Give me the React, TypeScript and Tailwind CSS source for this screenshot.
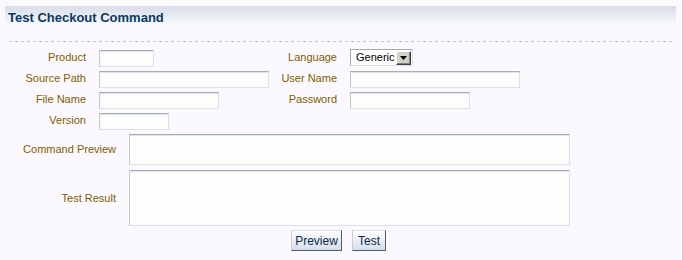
import React from "react";

const inputCls =
  "h-[17px] bg-[#fcfefc] border border-t-[#a5adb5] border-l-[#c3c8cf] border-r-[#dcdfe7] border-b-[#dcdfe7] shadow-[inset_0_1px_1px_#dfe3e6] outline-none px-1 text-[11px]";

function Label({ children, w }: { children: React.ReactNode; w: string }) {
  return <div className={`${w} shrink-0 text-right text-[11px] leading-[13px] text-[#7f5c00]`}>{children}</div>;
}

function Select() {
  return (
    <div className="flex h-[17px] w-[63px] items-center justify-between border border-t-[#a7a9ae] border-l-[#a7a9ae] border-r-[#dcdfe7] border-b-[#dcdfe7] bg-white pl-[5px] pr-px">
      <span className="text-[11px] leading-[13px] text-black">Generic</span>
      <div className="flex h-[14px] w-[15px] items-center justify-center border border-t-white border-l-white border-r-[#404040] border-b-[#404040] bg-[#d4d0c8] shadow-[inset_-1px_-1px_0_#808080]">
        <svg width="7" height="4" viewBox="0 0 7 4">
          <path d="M0 0h7L3.5 4z" fill="#000" />
        </svg>
      </div>
    </div>
  );
}

function Button({ children, w }: { children: React.ReactNode; w: string }) {
  return (
    <button
      className={`${w} h-[21px] border border-t-[#d9dee6] border-l-[#c9cfd8] border-r-[#4e5d6e] border-b-[#4e5d6e] bg-[linear-gradient(#ffffff,#d6deea)] text-[12px] leading-[14px] text-[#0c2a4c]`}
    >
      {children}
    </button>
  );
}

export default function App() {
  return (
    <div className="h-[260px] w-[683px] overflow-hidden border-r border-[#c9c9c9] bg-[#fbf9fd] pt-[6px] font-['Liberation_Sans',Arial,sans-serif]">
      <div className="ml-[5px] h-[17px] w-[671px] bg-[linear-gradient(#d9dde9,#f3f6fa)] pl-[3px] pt-[5px]">
        <h1 className="text-[13px] font-bold leading-[13px] text-[#0a3a5c]">Test Checkout Command</h1>
      </div>

      <div className="ml-[9px] mt-[18px] h-px w-[664px] bg-[repeating-linear-gradient(to_right,#c2c2ca_0_3px,transparent_3px_6px)]" />

      <div className="mt-[7px] flex flex-col gap-[4px]">
        <div className="flex h-[17px] items-center">
          <Label w="w-[86px]">Product</Label>
          <div className="ml-[13px] w-[170px]">
            <input className={`${inputCls} w-[55px]`} />
          </div>
          <Label w="w-[68px]">Language</Label>
          <div className="ml-[13px]">
            <Select />
          </div>
        </div>
        <div className="flex h-[17px] items-center">
          <Label w="w-[86px]">Source Path</Label>
          <div className="ml-[13px] w-[170px]">
            <input className={`${inputCls} w-[170px]`} />
          </div>
          <Label w="w-[68px]">User Name</Label>
          <div className="ml-[13px]">
            <input className={`${inputCls} w-[170px]`} />
          </div>
        </div>
        <div className="flex h-[17px] items-center">
          <Label w="w-[86px]">File Name</Label>
          <div className="ml-[13px] w-[170px]">
            <input className={`${inputCls} w-[120px]`} />
          </div>
          <Label w="w-[68px]">Password</Label>
          <div className="ml-[13px]">
            <input type="password" className={`${inputCls} w-[120px]`} />
          </div>
        </div>
        <div className="flex h-[17px] items-center">
          <Label w="w-[86px]">Version</Label>
          <div className="ml-[13px]">
            <input className={`${inputCls} w-[70px]`} />
          </div>
        </div>
      </div>

      <div className="mt-[5px] flex flex-col gap-[5px]">
        <div className="flex items-center">
          <Label w="w-[116px]">Command Preview</Label>
          <textarea className={`${inputCls} ml-[13px] h-[31px] w-[441px] resize-none`} />
        </div>
        <div className="flex items-center">
          <Label w="w-[116px]">Test Result</Label>
          <textarea className={`${inputCls} ml-[13px] h-[56px] w-[441px] resize-none`} />
        </div>
      </div>

      <div className="ml-[291px] mt-[4px] flex gap-[10px]">
        <Button w="w-[51px]">Preview</Button>
        <Button w="w-[34px]">Test</Button>
      </div>
    </div>
  );
}
